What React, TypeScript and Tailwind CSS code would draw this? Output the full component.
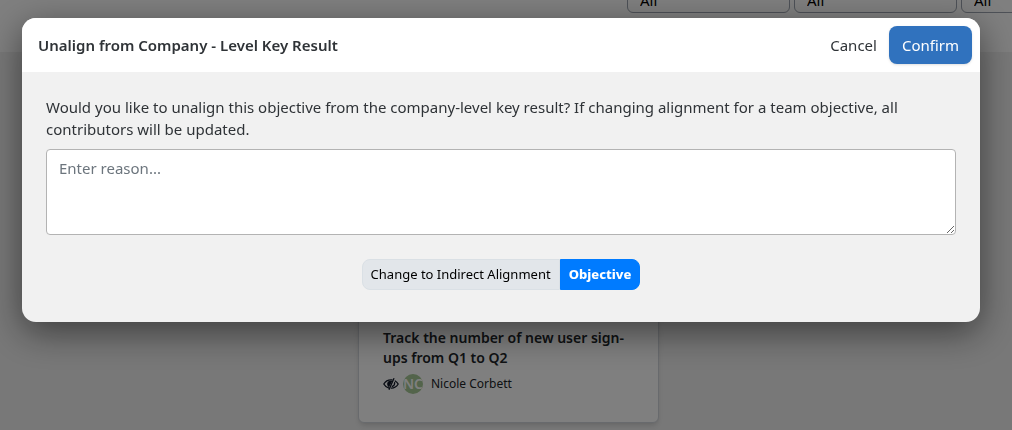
import { useState } from "react";
import clsx from "clsx";

const filters = ["Team", "Owner", "Status"];

const HiddenIcon = () => (
  <svg
    viewBox="0 0 16 12"
    className="h-3 w-4 shrink-0"
    fill="none"
    stroke="#111827"
    strokeWidth="1.3"
    strokeLinecap="round"
    aria-hidden="true"
  >
    <path d="M6 10.2C3.6 9.600 1.900 8 .8 6 2.300 3.500 4.900 1.900 8 1.900h1" />
    <path d="M12.200 3C13.500 3.800 14.500 4.800 15.200 6c-1.500 2.500-4 4.100-6.800 4.200" />
    <path d="M10.800.7 6.200 11.300" />
    <path d="M8.300 3.500C6.500 3 4.800 4.200 4.800 6c0 .9.400 1.700 1 2.200z" fill="#111827" />
    <path d="M11.600 4.600c.2 1.700-.7 3.200-2.200 3.800" />
  </svg>
);

const Filters = () => (
  <div className="-mt-[25px] flex h-[77px] justify-end bg-white">
    <div className="flex w-[385px] gap-1 overflow-hidden">
      {filters.map((name) => (
        <select
          key={name}
          aria-label={name}
          className="h-[38px] w-[163px] shrink-0 appearance-none rounded-md border border-[#9ca3af] bg-white pt-3 pl-3 text-[15px] leading-5 text-black"
        >
          <option>All</option>
        </select>
      ))}
    </div>
  </div>
);

const KeyResultCard = () => (
  <article className="mx-auto w-[301px] rounded-md border border-[#d1d5db] bg-white px-6 pt-6 pb-7 text-[#212529] shadow-md">
    <h2 className="text-sm leading-5 font-semibold">
      Track the number of new user sign-ups from Q1 to Q2
    </h2>
    <div className="mt-1.5 flex h-5 items-center text-xs">
      <HiddenIcon />
      <span className="ml-1 flex size-5 shrink-0 items-center justify-center overflow-hidden rounded-full bg-[#a6c896] text-sm font-semibold text-white">
        NC
      </span>
      <span className="ml-2">Nicole Corbett</span>
    </div>
  </article>
);

const UnalignDialog = () => {
  const [reason, setReason] = useState("");
  const [indirect, setIndirect] = useState(false);

  return (
    <div
      role="dialog"
      aria-modal="true"
      aria-labelledby="unalign-title"
      className="w-full overflow-hidden rounded-[14px] bg-[#f1f1f1] text-[#2f3337] shadow-[0_10px_36px_rgba(0,0,0,0.5)]"
    >
      <header className="flex items-center justify-between bg-white py-2 pr-2 pl-4">
        <h1 id="unalign-title" className="text-[15px] font-semibold">
          Unalign from Company - Level Key Result
        </h1>
        <div className="flex">
          <button type="button" className="px-3 text-[15px]">
            Cancel
          </button>
          <button
            type="button"
            className="h-[38px] rounded-lg bg-[#3072be] px-[13px] text-[15px] text-white shadow-sm"
          >
            Confirm
          </button>
        </div>
      </header>

      <div className="px-6 pt-6 pb-8">
        <label htmlFor="reason" className="block text-[15px] leading-[22px]">
          Would you like to unalign this objective from the company-level key
          result? If changing alignment for a team objective, all contributors
          will be updated.
        </label>
        <textarea
          id="reason"
          value={reason}
          onChange={(e) => setReason(e.target.value)}
          placeholder="Enter reason..."
          className="mt-[9px] block h-[86px] w-full resize rounded border border-[#b3b3b3] bg-white px-3 py-[7px] text-[15px] leading-[22px] placeholder:text-[#6c757d]"
        />
        <div className="mt-6 flex justify-center text-[13px] text-black">
          <button
            type="button"
            aria-pressed={indirect}
            onClick={() => setIndirect(true)}
            className={clsx(
              "h-[31px] rounded-l-lg border px-2",
              indirect
                ? "border-[#007bff] bg-[#007bff] font-extrabold text-white"
                : "border-[#dae0e5] bg-[#e2e6ea]"
            )}
          >
            Change to Indirect Alignment
          </button>
          <button
            type="button"
            aria-pressed={!indirect}
            onClick={() => setIndirect(false)}
            className={clsx(
              "h-[31px] rounded-r-lg border px-2",
              indirect
                ? "border-[#dae0e5] bg-[#e2e6ea]"
                : "border-[#007bff] bg-[#007bff] font-extrabold text-white"
            )}
          >
            Objective
          </button>
        </div>
      </div>
    </div>
  );
};

export default function App() {
  return (
    <div className="h-screen overflow-hidden bg-[#f1f1f1] font-['Noto_Sans','Open_Sans',sans-serif]">
      <Filters />
      <main className="pt-[251px] pl-[5px]">
        <KeyResultCard />
      </main>

      <div className="fixed inset-0 flex items-start bg-black/50 pt-[18px] pr-8 pl-[22px]">
        <UnalignDialog />
      </div>
    </div>
  );
}
